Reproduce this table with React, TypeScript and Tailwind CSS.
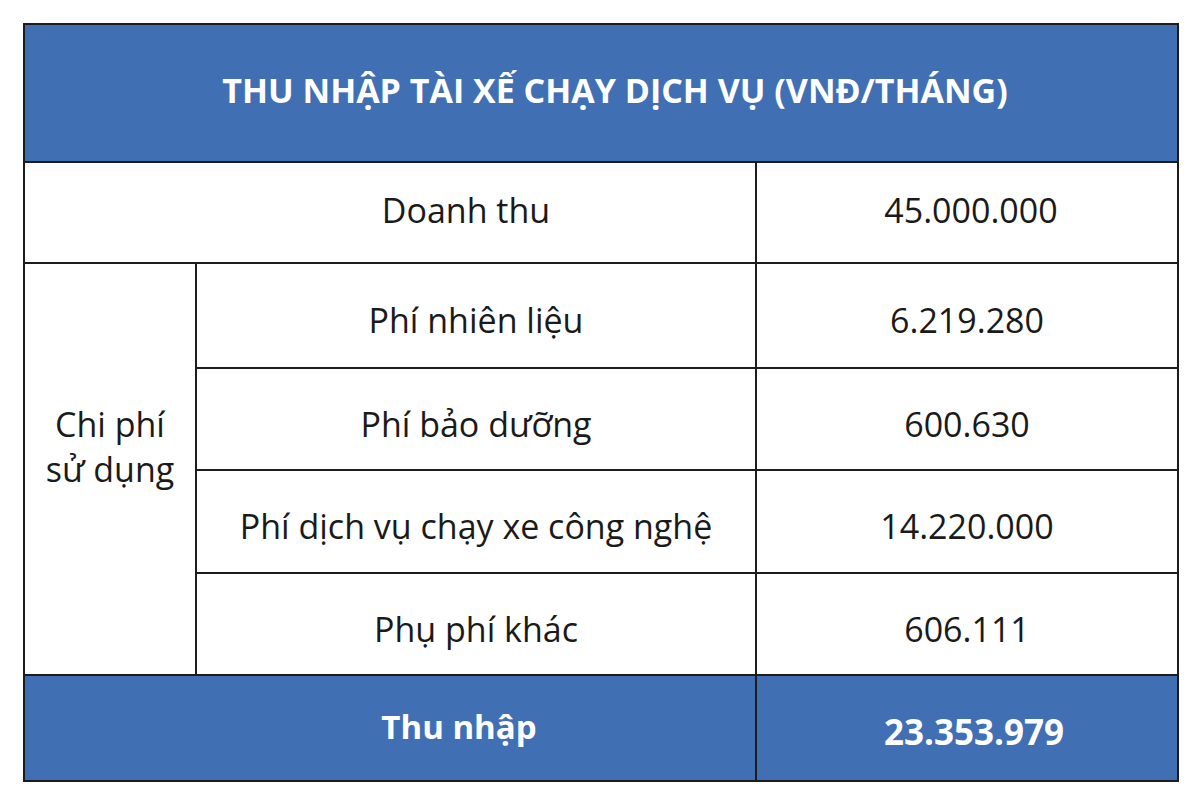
import React from "react";

const rows = [
  ["Phí nhiên liệu", "6.219.280"],
  ["Phí bảo dưỡng", "600.630"],
  ["Phí dịch vụ chạy xe công nghệ", "14.220.000"],
  ["Phụ phí khác", "606.111"],
];

export default function App() {
  return (
    <div className="w-[1200px] h-[801px] bg-white pl-[23px] pt-[23px]" style={{ fontFamily: '"Open Sans", "Noto Sans", sans-serif' }}>
      <div className="w-[1156px] bg-[#1c1c1c] p-[2px] grid gap-[2px] grid-cols-[170px_558px_420px] grid-rows-[136px_99px_103px_100px_101px_100px_104px] text-[#1a1a1a] text-[34px]">
        <div className="col-span-3 bg-[#416fb4] flex items-center justify-center text-white font-bold text-[34px] pb-[6px] pl-[28px]">
          THU NHẬP TÀI XẾ CHẠY DỊCH VỤ (VNĐ/THÁNG)
        </div>
        <div className="col-span-2 bg-white flex items-center justify-center pb-[4px] pl-[152px]">Doanh thu</div>
        <div className="bg-white flex items-center justify-center pb-[4px] pl-[8px]">45.000.000</div>
        <div className="row-span-4 bg-white flex items-center justify-center text-center leading-[45px] pb-[44px]">
          Chi phí
          <br />
          sử dụng
        </div>
        {rows.map(([label, value]) => (
          <React.Fragment key={label}>
            <div className="bg-white flex items-center justify-center pt-[10px]">{label}</div>
            <div className="bg-white flex items-center justify-center pt-[10px]">{value}</div>
          </React.Fragment>
        ))}
        <div className="col-span-2 bg-[#416fb4] flex items-center justify-center text-white font-bold text-[33px] pb-[2px] pl-[138px]">
          Thu nhập
        </div>
        <div className="bg-[#416fb4] flex items-center justify-center text-white font-bold text-[35px] pt-[8px] pl-[14px]">
          23.353.979
        </div>
      </div>
    </div>
  );
}
